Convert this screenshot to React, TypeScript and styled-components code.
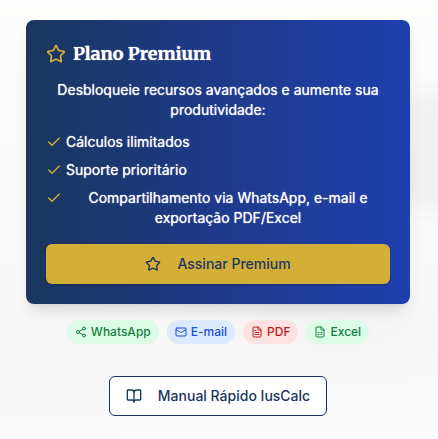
import React from "react";
import styled, { createGlobalStyle } from "styled-components";
import {
  BookOpen,
  Check,
  FileSpreadsheet,
  FileText,
  Mail,
  Share2,
  Star,
} from "lucide-react";

const navy = "#1a365d";
const gold = "#d4af37";

const GlobalStyle = createGlobalStyle`
  *, *::before, *::after { box-sizing: border-box; }
  body {
    margin: 0;
    font-family: Inter, "Liberation Sans", sans-serif;
    font-size: 14px;
    line-height: 20px;
    background: #fafafa;
  }
`;

const Page = styled.main`
  min-height: 100vh;
  padding: 20px 28px 20px 26px;
  display: flex;
  flex-direction: column;
  align-items: center;
  background:
    radial-gradient(ellipse 50% 18% at 12% 84%, rgba(0, 0, 0, 0.015), transparent),
    radial-gradient(ellipse 60% 17% at 100% 34%, rgba(0, 0, 0, 0.04) 60%, transparent),
    radial-gradient(ellipse 40% 14% at 76% 76%, rgba(0, 0, 0, 0.02), transparent),
    linear-gradient(180deg, #fdfdfc, #f8f8f8 75%, #fbfbfb);
`;

const Card = styled.section`
  width: 100%;
  padding: 20px;
  border-radius: 8px;
  color: #fff;
  background: linear-gradient(to right, ${navy}, #1e3a8a 50%, #1e40af);
  box-shadow: 0 10px 15px -3px rgba(0, 0, 0, 0.1), 0 4px 6px -4px rgba(0, 0, 0, 0.1);
`;

const Title = styled.h2`
  margin: 0 0 12px;
  display: flex;
  align-items: center;
  gap: 7px;
  font-family: Merriweather, "DejaVu Serif Condensed", "DejaVu Serif", serif;
  font-size: 18px;
  line-height: 28px;
  font-weight: 700;
  text-shadow: 0 0 1px #fff;

  svg { color: ${gold}; flex: none; }
`;

const Description = styled.p`
  margin: 0 0 12px;
  text-align: center;
  color: rgba(255, 255, 255, 0.95);
  text-shadow: 0 0 1px #fff;
`;

const Features = styled.ul`
  list-style: none;
  margin: 0 0 16px;
  padding: 0;
  display: grid;
  gap: 8px;
`;

const Feature = styled.li<{ $wide?: boolean }>`
  display: flex;
  align-items: flex-start;
  gap: 4px;
  color: rgba(255, 255, 255, 0.95);
  text-shadow: 0 0 1px #fff;

  svg { color: ${gold}; flex: none; margin-top: 2px; }
  span { flex: ${(p) => (p.$wide ? "1" : "none")}; text-align: center; }
`;

const Button = styled.button<{ $variant: "primary" | "outline" }>`
  width: ${(p) => (p.$variant === "primary" ? "100%" : "auto")};
  height: 40px;
  padding: 0 16px;
  display: flex;
  align-items: center;
  justify-content: center;
  gap: 16px;
  border-radius: 6px;
  border: ${(p) => (p.$variant === "primary" ? "0" : `1px solid ${navy}`)};
  background: ${(p) => (p.$variant === "primary" ? gold : "#fff")};
  box-shadow: ${(p) => (p.$variant === "primary" ? "0 1px 3px rgba(0, 0, 0, 0.2)" : "none")};
  color: ${navy};
  font: 500 14px/20px Inter, "Liberation Sans", sans-serif;
  cursor: pointer;
`;

const Badges = styled.div`
  margin: 16px 0 32px;
  display: flex;
  flex-wrap: wrap;
  justify-content: center;
  gap: 8px;
`;

const tones = {
  green: ["#dcfce7", "#15803d"],
  blue: ["#dbeafe", "#1d4ed8"],
  red: ["#fee2e2", "#b91c1c"],
};

const Badge = styled.span<{ $tone: keyof typeof tones }>`
  display: inline-flex;
  align-items: center;
  gap: 4px;
  padding: 4px 8px;
  border-radius: 12px;
  font-size: 12px;
  line-height: 16px;
  font-weight: 500;
  background: ${(p) => tones[p.$tone][0]};
  color: ${(p) => tones[p.$tone][1]};
`;

export default function App() {
  return (
    <>
      <GlobalStyle />
      <Page>
        <Card>
          <Title>
            <Star size={20} />
            Plano Premium
          </Title>
          <Description>
            Desbloqueie recursos avançados e aumente sua produtividade:
          </Description>
          <Features>
            <Feature>
              <Check size={16} />
              <span>Cálculos ilimitados</span>
            </Feature>
            <Feature>
              <Check size={16} />
              <span>Suporte prioritário</span>
            </Feature>
            <Feature $wide>
              <Check size={16} />
              <span>Compartilhamento via WhatsApp, e-mail e exportação PDF/Excel</span>
            </Feature>
          </Features>
          <Button type="button" $variant="primary">
            <Star size={16} />
            Assinar Premium
          </Button>
        </Card>
        <Badges>
          <Badge $tone="green"><Share2 size={12} />WhatsApp</Badge>
          <Badge $tone="blue"><Mail size={12} />E-mail</Badge>
          <Badge $tone="red"><FileText size={12} />PDF</Badge>
          <Badge $tone="green"><FileSpreadsheet size={12} />Excel</Badge>
        </Badges>
        <Button type="button" $variant="outline">
          <BookOpen size={16} />
          Manual Rápido IusCalc
        </Button>
      </Page>
    </>
  );
}
